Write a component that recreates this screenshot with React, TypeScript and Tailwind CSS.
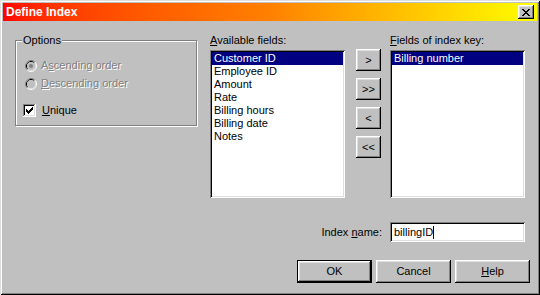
import React from "react";

const raised =
  "shadow-[inset_-1px_-1px_0_#000,inset_1px_1px_0_#fff,inset_-2px_-2px_0_#808080,inset_2px_2px_0_#dfdfdf]";
const sunken =
  "shadow-[inset_1px_1px_0_#808080,inset_-1px_-1px_0_#fff,inset_2px_2px_0_#000,inset_-2px_-2px_0_#dfdfdf]";

const availableFields = [
  "Customer ID",
  "Employee ID",
  "Amount",
  "Rate",
  "Billing hours",
  "Billing date",
  "Notes",
];

function CloseGlyph() {
  const px = [
    "XX....XX",
    ".XX..XX.",
    "..XXXX..",
    "...XX...",
    "..XXXX..",
    ".XX..XX.",
    "XX....XX",
  ];
  return (
    <svg width="8" height="7" viewBox="0 0 8 7" shapeRendering="crispEdges">
      {px.flatMap((row, y) =>
        row.split("").map((c, x) => (c === "X" ? <rect key={`${x}-${y}`} x={x} y={y} width="1" height="1" fill="#000" /> : null))
      )}
    </svg>
  );
}

function CheckGlyph() {
  const px = ["......X", ".....XX", "X...XXX", "XX.XXX.", "XXXXX..", ".XXX...", "..X...."];
  return (
    <svg width="13" height="13" viewBox="0 0 13 13" shapeRendering="crispEdges">
      <rect x="0" y="0" width="12" height="1" fill="#808080" />
      <rect x="0" y="0" width="1" height="12" fill="#808080" />
      <rect x="0" y="12" width="13" height="1" fill="#fff" />
      <rect x="12" y="0" width="1" height="13" fill="#fff" />
      <rect x="1" y="1" width="10" height="1" fill="#000" />
      <rect x="1" y="1" width="1" height="10" fill="#000" />
      <rect x="1" y="11" width="11" height="1" fill="#dfdfdf" />
      <rect x="11" y="1" width="1" height="11" fill="#dfdfdf" />
      <rect x="2" y="2" width="9" height="9" fill="#fff" />
      {px.flatMap((row, y) =>
        row.split("").map((c, x) => (c === "X" ? <rect key={`${x}-${y}`} x={x + 3} y={y + 3} width="1" height="1" fill="#000" /> : null))
      )}
    </svg>
  );
}

function RadioGlyph({ checked }: { checked?: boolean }) {
  return (
    <svg width="12" height="12" viewBox="0 0 12 12">
      <path d="M2.11 9.89 A5.5 5.5 0 0 1 9.89 2.11" fill="none" stroke="#808080" strokeWidth="1" />
      <path d="M9.89 2.11 A5.5 5.5 0 0 1 2.11 9.89" fill="none" stroke="#fff" strokeWidth="1" />
      <path d="M2.82 9.18 A4.5 4.5 0 0 1 9.18 2.82" fill="none" stroke="#000" strokeWidth="1" />
      <path d="M9.18 2.82 A4.5 4.5 0 0 1 2.82 9.18" fill="none" stroke="#dfdfdf" strokeWidth="1" />
      <circle cx="6" cy="6" r="4" fill="#c0c0c0" />
      {checked && <circle cx="6" cy="6" r="2" fill="#808080" />}
    </svg>
  );
}

function Btn({ children, def, className = "" }: { children: React.ReactNode; def?: boolean; className?: string }) {
  if (def) {
    return (
      <div className={`border border-black ${className}`}>
        <div className={`h-full w-full flex items-center justify-center ${raised}`}>{children}</div>
      </div>
    );
  }
  return <div className={`flex items-center justify-center ${raised} ${className}`}>{children}</div>;
}

export default function App() {
  return (
    <div
      className="w-[540px] h-[295px] bg-[#c0c0c0] p-[3px] flex flex-col text-[11px] leading-[13px] text-black shadow-[inset_1px_1px_0_#dfdfdf,inset_-1px_-1px_0_#000,inset_2px_2px_0_#fff,inset_-2px_-2px_0_#808080]"
      style={{ fontFamily: '"Liberation Sans", Arial, sans-serif' }}
    >
      {/* Title bar */}
      <div className="h-[18px] flex items-center justify-between pl-[3px] pr-[3px] bg-gradient-to-r from-[#ff0000] via-[#ff8000] to-[#ffff00]">
        <span className="text-white font-bold text-[12px] leading-[14px]">Define Index</span>
        <div className={`w-[16px] h-[14px] bg-[#c0c0c0] flex items-center justify-center ${raised}`}>
          <CloseGlyph />
        </div>
      </div>

      {/* Body */}
      <div className="flex flex-col pt-[13px]">
        <div className="flex items-start pl-[12px]">
          {/* Options */}
          <fieldset className="w-[182px] h-[92px] border border-[#808080] shadow-[inset_1px_1px_0_#fff,1px_1px_0_#fff] pl-[8px]">
            <legend className="-ml-[2px] px-[1px] bg-[#c0c0c0]">Options</legend>
            <div className="flex flex-col pt-[12px]">
              <div className="flex items-center h-[13px] pl-[1px] gap-[4px] text-[#808080] [text-shadow:1px_1px_0_#fff]">
                <RadioGlyph checked />
                <span>
                  A<span className="underline">s</span>cending order
                </span>
              </div>
              <div className="flex items-center h-[13px] pl-[1px] gap-[4px] mt-[5px] text-[#808080] [text-shadow:1px_1px_0_#fff]">
                <RadioGlyph />
                <span>
                  <span className="underline">D</span>escending order
                </span>
              </div>
              <div className="flex items-center h-[13px] gap-[6px] mt-[14px] -ml-[1px]">
                <CheckGlyph />
                <span>
                  <span className="underline">U</span>nique
                </span>
              </div>
            </div>
          </fieldset>

          {/* Available fields */}
          <div className="ml-[13px] flex flex-col">
            <div className="h-[13px] mb-[3px]">
              <span className="underline">A</span>vailable fields:
            </div>
            <div className={`w-[135px] h-[148px] bg-white p-[2px] ${sunken}`}>
              {availableFields.map((f, i) => (
                <div key={f} className={`h-[13px] pl-[2px] ${i === 0 ? "bg-[#000080] text-white" : ""}`}>
                  {f}
                </div>
              ))}
            </div>
          </div>

          {/* Move buttons */}
          <div className="ml-[11px] pt-[15px] flex flex-col gap-[7px]">
            <Btn className="w-[25px] h-[22px]">&gt;</Btn>
            <Btn className="w-[25px] h-[22px]">&gt;&gt;</Btn>
            <Btn className="w-[25px] h-[22px]">&lt;</Btn>
            <Btn className="w-[25px] h-[22px]">&lt;&lt;</Btn>
          </div>

          {/* Fields of index key */}
          <div className="ml-[9px] flex flex-col">
            <div className="h-[13px] mb-[3px]">
              <span className="underline">F</span>ields of index key:
            </div>
            <div className={`w-[135px] h-[148px] bg-white p-[2px] ${sunken}`}>
              <div className="h-[13px] pl-[2px] bg-[#000080] text-white">Billing number</div>
            </div>
          </div>
        </div>

        {/* Index name */}
        <div className="mt-[24px] flex items-center justify-end pr-[12px] gap-[8px]">
          <span>
            Index <span className="underline">n</span>ame:
          </span>
          <div className={`w-[135px] h-[20px] bg-white flex items-center pl-[4px] ${sunken}`}>
            <span>billingID</span>
            <span className="w-[1px] h-[13px] bg-black" />
          </div>
        </div>

        {/* Dialog buttons */}
        <div className="mt-[18px] flex justify-end pr-[7px] gap-[4px]">
          <Btn def className="w-[75px] h-[23px]">OK</Btn>
          <Btn className="w-[75px] h-[23px]">Cancel</Btn>
          <Btn className="w-[75px] h-[23px]">
            <span>
              <span className="underline">H</span>elp
            </span>
          </Btn>
        </div>
      </div>
    </div>
  );
}
